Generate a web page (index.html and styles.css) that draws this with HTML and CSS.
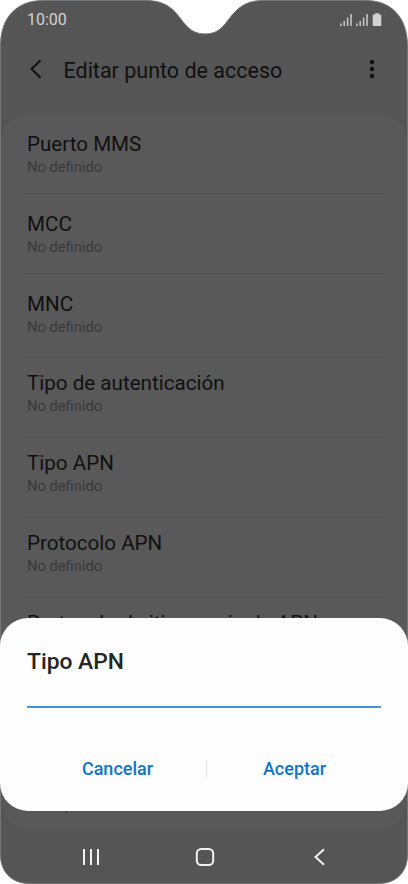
FILE: index.html
```html
<!DOCTYPE html>
<html lang="es">
<head>
  <meta charset="utf-8">
  <title>Editar punto de acceso</title>
  <link rel="stylesheet" href="styles.css">
</head>
<body>
  <div class="phone">
    <!-- screen outline with the notch -->
    <svg class="screen" width="408" height="884" viewBox="0 0 408 884">
      <path d="M43 .5H146C160 .5 169 5 176 13C184 22 189 34 205 34C221 34 225 23 233 14C241 5 249 .5 263 .5H366C391 .5 407.500 17 407.500 46V855C407.500 872 396 883.500 379 883.500H29C12 883.500 .5 872 .5 855V46C.5 17 17 .5 43 .5Z"/>
    </svg>

    <div class="statusbar">
      <span class="time">10:00</span>
      <svg class="status-icons" width="42" height="14" viewBox="0 0 42 14">
        <path d="M.8 10.500V13M4.200 8V13M7.600 4.500V13M11 1V13M16.800 10.500V13M20.200 8V13M23.600 4.500V13M27 1V13"/>
        <path class="battery" d="M33.500 1.500H35V.3H39V1.500H40.500Q41.300 1.500 41.300 2.300V12.200Q41.300 13 40.500 13H33.500Q32.700 13 32.700 12.200V2.300Q32.700 1.500 33.500 1.500Z"/>
      </svg>
    </div>

    <div class="header">
      <svg class="back" width="12" height="20" viewBox="0 0 12 20"><path d="M10.500 1.300L1.600 10L10.500 18.700"/></svg>
      <h1>Editar punto de acceso</h1>
      <svg class="more" width="6" height="20" viewBox="0 0 6 20">
        <circle cx="3" cy="3" r="2.200"/><circle cx="3" cy="10" r="2.200"/><circle cx="3" cy="17" r="2.200"/>
      </svg>
    </div>

    <ul class="list">
      <li><h2>Puerto MMS</h2><p>No definido</p></li>
      <li><h2>MCC</h2><p>No definido</p></li>
      <li><h2>MNC</h2><p>No definido</p></li>
      <li><h2>Tipo de autenticación</h2><p>No definido</p></li>
      <li><h2>Tipo APN</h2><p>No definido</p></li>
      <li><h2>Protocolo APN</h2><p>No definido</p></li>
      <li><h2>Protocolo de itinerancia de APN</h2></li>
      <li></li>
      <li><h2></h2><p>No especificado</p></li>
    </ul>

    <div class="navbar">
      <svg width="18" height="18" viewBox="0 0 18 18"><path d="M2 1V17M9 1V17M16 1V17"/></svg>
      <svg width="20" height="18" viewBox="0 0 20 18"><rect x="1.800" y="1" width="16.400" height="16" rx="4.500"/></svg>
      <svg width="16" height="18" viewBox="0 0 16 18"><path d="M14 1.200L5.500 9L14 16.800"/></svg>
    </div>

    <div class="dialog">
      <h3>Tipo APN</h3>
      <div class="field"></div>
      <div class="buttons">
        <span class="btn">Cancelar</span>
        <span class="sep"></span>
        <span class="btn">Aceptar</span>
      </div>
    </div>
  </div>
</body>
</html>
```

FILE: styles.css
```css
* { box-sizing: border-box; }
body {
  margin: 0;
  background: #fff;
  font-family: Roboto, "Liberation Sans", sans-serif;
}
h1, h2, h3, p, ul { margin: 0; padding: 0; font-weight: 400; }
svg { display: block; fill: none; }

.phone {
  position: relative;
  width: 408px;
  height: 884px;
  overflow: hidden;
  display: flex;
  flex-direction: column;
}
.screen { position: absolute; top: 0; left: 0; }
.screen path { fill: #555; stroke: #777; stroke-width: 1; }
.statusbar, .header, .list, .navbar { position: relative; }

/* status bar */
.statusbar {
  height: 38px;
  padding: 1px 26px 0 27px;
  display: flex;
  align-items: center;
  justify-content: space-between;
}
.time { font-size: 16px; line-height: 20px; color: #d2d2d2; }
.status-icons path { stroke: #c4c4c4; stroke-width: 1.6; }
.status-icons .battery { fill: #d2d2d2; stroke: none; }

/* title bar */
.header {
  height: 76px;
  padding: 0 33px 14px 30px;
  display: flex;
  align-items: center;
}
.back path { stroke: #111; stroke-width: 2; }
.header h1 {
  flex: 1;
  margin-left: 21.5px;
  padding-top: 3px;
  font-size: 21.5px;
  line-height: 28px;
  color: #111;
}
.more { fill: #111; }

/* settings */
.list {
  height: 715px;
  margin: 0 1px;
  padding: 0 23px;
  border-radius: 28px;
  background: #595959;
  list-style: none;
  overflow: hidden;
}
.list li {
  height: 79.8px;
  padding: 17px 3px 0;
  border-bottom: 1px solid #535353;
}
.list li:last-child { border-bottom: 0; }
.list h2 { height: 27px; font-size: 20.6px; line-height: 27px; color: #111; }
.list p { font-size: 14.7px; line-height: 19.6px; color: #393939; }

/* navigation keys */
.navbar {
  flex: 1;
  padding: 0 82px;
  display: flex;
  align-items: center;
  justify-content: space-between;
}
.navbar svg { stroke: #f2f2f2; stroke-width: 2; }

.dialog {
  position: absolute;
  top: 618px;
  left: 0;
  width: 408px;
  height: 193px;
  padding: 29px 27px 0;
  border-radius: 28px;
  background: #fdfdfd;
}
.dialog h3 { font-size: 22.8px; line-height: 30px; font-weight: 500; color: #252525; }
.field { height: 31px; border-bottom: 2px solid #4494d5; }
.buttons {
  height: 121px;
  margin: 0 -5px 0 3px;
  display: flex;
  align-items: center;
}
.btn {
  flex: 1;
  text-align: center;
  font-size: 18px;
  font-weight: 500;
  color: #1474c4;
}
.btn:last-child { padding-right: 4px; }
.sep { width: 1px; height: 18px; margin-left: 1px; background: #e5e5e5; }
```
